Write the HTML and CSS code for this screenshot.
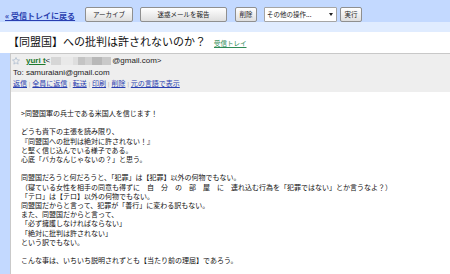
FILE: index.html
```html
<!DOCTYPE html>
<html lang="ja">
<head>
    <meta charset="UTF-8">
    <title>【同盟国】への批判は許されないのか？</title>
    <link rel="stylesheet" href="styles.css">
</head>
<body>
    <div class="toolbar">
        <a class="back" href="#">« 受信トレイに戻る</a>
        <span class="btn btn-archive">アーカイブ</span>
        <span class="btn btn-spam">迷惑メールを報告</span>
        <span class="btn btn-small">削除</span>
        <span class="select">その他の操作...<i class="arrow"></i></span>
        <span class="btn btn-small">実行</span>
    </div>
    <div class="strip"></div>

    <div class="subject">
        <h1>【同盟国】への批判は許されないのか？</h1>
        <a class="label" href="#">受信トレイ</a>
    </div>

    <div class="message">
        <div class="inner">
            <div class="msg-head">
                <div class="from">
                    <svg class="star" width="8" height="8" viewBox="0 0 10 10"><path d="M5 .6l1.3 2.9 3.1.3-2.4 2 .7 3.1L5 7.3 2.3 8.9 3 5.8.6 3.8l3.1-.3z" fill="none" stroke="#a9b8cc" stroke-width=".9"/></svg>
                    <a class="sender" href="#">yuri t</a>&lt;<span class="blur"></span>@gmail.com&gt;
                </div>
                <div class="to">To: samuraiani@gmail.com</div>
                <div class="actions">
                    <a href="#">返信</a><span class="sep">|</span><a href="#">全員に返信</a><span class="sep">|</span><a href="#">転送</a><span class="sep">|</span><a href="#">印刷</a><span class="sep">|</span><a href="#">削除</a><span class="sep">|</span><a href="#">元の言語で表示</a>
                </div>
            </div>

            <div class="msg-body">
                <p>&gt;同盟国軍の兵士である米国人を信じます！</p>
                <p>どうも貴下の主張を読み限り、<br>
                『同盟国への批判は絶対に許されない！』<br>
                と堅く信じ込んでいる様子である。<br>
                心底「バカなんじゃないの？」と思う。</p>
                <p>同盟国だろうと何だろうと、「犯罪」は【犯罪】以外の何物でもない。<br>
                （寝ている女性を相手の同意も得ずに　自　分　の　部　屋　に　連れ込む行為を「犯罪ではない」とか言うなよ？）<br>
                「テロ」は【テロ】以外の何物でもない。<br>
                同盟国だからと言って、犯罪が「善行」に変わる訳もない。<br>
                また、同盟国だからと言って、<br>
                「必ず擁護しなければならない」<br>
                「絶対に批判は許されない」<br>
                という訳でもない。</p>
                <p>こんな事は、いちいち説明されずとも【当たり前の理屈】であろう。</p>
            </div>
        </div>
    </div>
</body>
</html>
```

FILE: styles.css
```css
body {
    margin: 0;
    font-family: "Liberation Sans", "Noto Sans CJK JP", sans-serif;
    color: #222;
    background-color: #fff;
}
.toolbar {
    height: 22px;
    box-sizing: border-box;
    padding: 7px 0 0 5px;
    display: flex;
    align-items: flex-start;
    background-color: #c3d9ff;
}
.back {
    font-family: "Noto Sans CJK JP", sans-serif;
    font-size: 8px;
    font-weight: bold;
    line-height: 13px;
    color: #2a3fb0;
    margin: 2px 10px 0 0;
}
.btn, .select {
    height: 13px;
    line-height: 13px;
    font-family: "Noto Sans CJK JP", sans-serif;
    font-size: 6.5px;
    color: #222;
    text-align: center;
    border: 1px solid #8f8f8f;
    border-radius: 2px;
    background: linear-gradient(#ffffff, #dedede);
}
.btn-archive {
    width: 46px;
    margin-right: 7px;
}
.btn-spam {
    width: 85px;
    margin-right: 8px;
}
.btn-small {
    width: 20px;
    margin-right: 7px;
}
.select {
    width: 66px;
    padding: 0 3px 0 2px;
    margin-right: 3px;
    text-align: left;
    background: #fff;
    border-color: #a5a5a5;
    border-radius: 1px;
    display: flex;
    align-items: center;
    justify-content: space-between;
}
.arrow {
    border-left: 2.5px solid transparent;
    border-right: 2.5px solid transparent;
    border-top: 3px solid #222;
}
.strip {
    height: 10px;
    background-color: #e0ecff;
}
.subject {
    height: 21px;
    box-sizing: border-box;
    padding: 2px 0 0 8px;
    display: flex;
    align-items: baseline;
    gap: 8px;
}
.subject h1 {
    margin: 0;
    font-family: "Noto Sans CJK JP", sans-serif;
    font-size: 11px;
    font-weight: normal;
    line-height: 14px;
    color: #111;
}
.label {
    font-family: "Noto Sans CJK JP", sans-serif;
    font-size: 6.5px;
    color: #2f8a55;
}
.message {
    height: 221px;
    box-sizing: border-box;
    border-left: 10px solid #c3d9ff;
}
.inner {
    height: 100%;
    border-left: 1px solid #c9c9c9;
}
.msg-head {
    padding: 1px 0 3px 1px;
    border-top: 1px solid #c8c8c8;
    background-color: #eeeeee;
    font-size: 8px;
}
.from {
    height: 12px;
    line-height: 12px;
    display: flex;
    align-items: center;
}
.star {
    margin: 0 6px 0 0;
}
.sender {
    font-weight: bold;
    color: #1f7a2e;
}
.blur {
    display: inline-block;
    width: 60px;
    height: 8px;
    margin: 0 1px;
    background: linear-gradient(90deg, #d6d6d6 0 10px, #e9e9e9 10px 22px, #dedede 22px 27px, #c4c4c4 27px 34px, #d0d0d0 34px 41px, #b8b8b8 41px 51px, #c9c9c9 51px 60px);
}
.to {
    height: 11px;
    line-height: 11px;
    padding-left: 1px;
}
.actions {
    height: 11px;
    line-height: 11px;
    padding-left: 1px;
    font-family: "Noto Sans CJK JP", sans-serif;
    font-size: 7px;
}
.actions a {
    color: #2a3fb0;
}
.sep {
    color: #888;
    font-size: 5px;
    margin: 0 2px;
}
.msg-body {
    padding: 17px 0 0 10px;
    font-family: "Noto Sans CJK JP", sans-serif;
    font-size: 7px;
    line-height: 9.2px;
    color: #111;
}
.msg-body p {
    margin: 0 0 9.2px;
}
```
